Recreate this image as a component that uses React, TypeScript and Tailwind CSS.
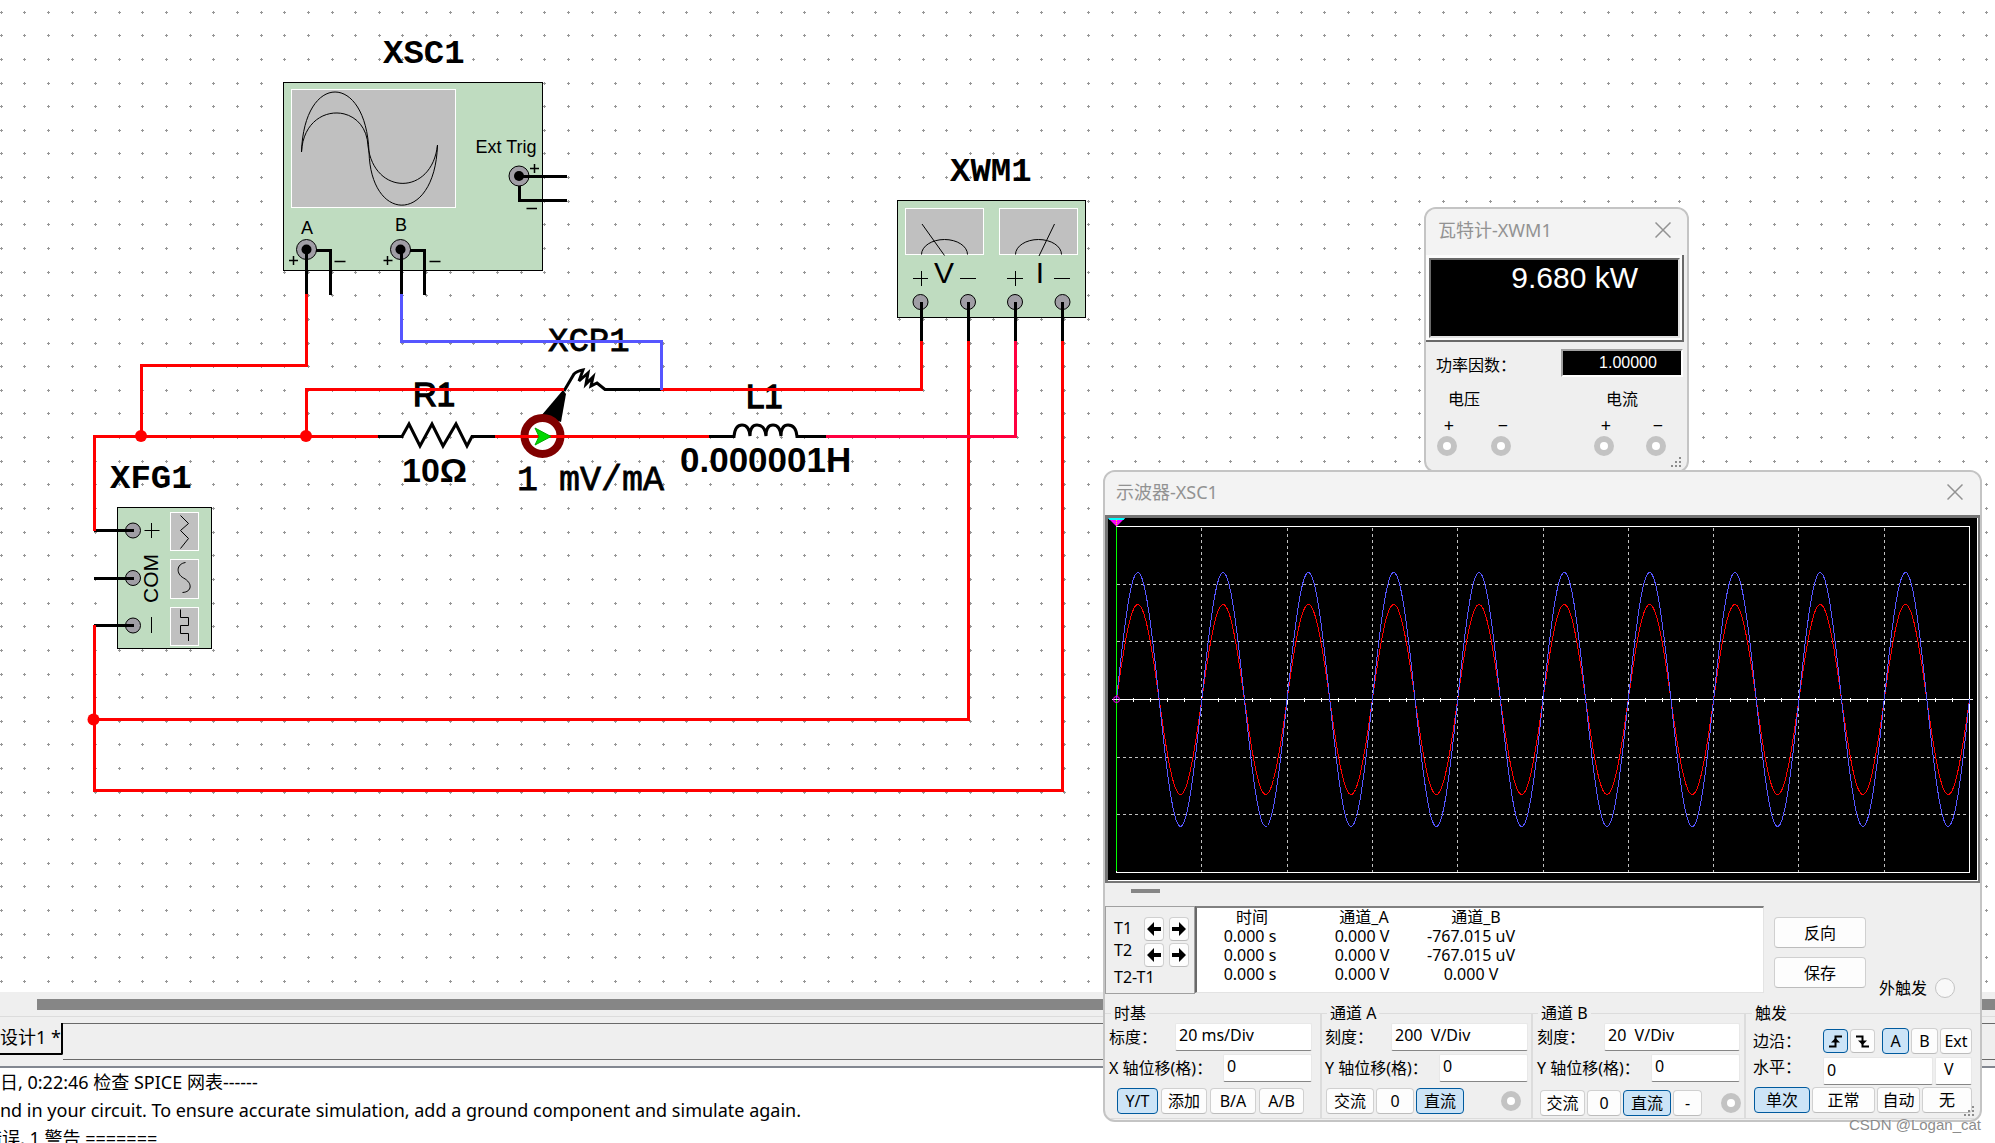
import React from "react";

const UI = "font-['Noto_Sans','Noto_Sans_CJK_SC',sans-serif]";

const GRID = (() => {
  let d = "";
  const pitch = 23.64;
  for (let r = 0; r < 60; r++) {
    for (let c = 0; c < 130; c++) {
      const x = Math.round(0.6 + c * pitch);
      const y = Math.round(11.6 + r * pitch);
      d += `M${x - 1} ${y + 0.5}h3M${x + 0.5} ${y - 1}v3`;
    }
  }
  return d;
})();

function Terminal({ x, y, core = false }: { x: number; y: number; core?: boolean }) {
  return (
    <g>
      <circle cx={x} cy={y} r={core ? 10 : 7.5} fill="#a09ea5" stroke="#000" strokeWidth="1" />
      {core && <circle cx={x} cy={y} r="5" fill="#000" />}
    </g>
  );
}

function Schematic() {
  const mono = "Liberation Mono, monospace";
  const sans = "Liberation Sans, sans-serif";
  return (
    <svg className="block h-full w-full" role="img" aria-label="Circuit schematic">
      <path d={GRID} stroke="#979797" strokeWidth="1" shapeRendering="crispEdges" />

      {/* oscilloscope symbol */}
      <rect x="283.5" y="82.5" width="259" height="188" fill="#bfdcc0" stroke="#000" />
      <rect x="291.5" y="89.5" width="164" height="118" fill="#c0c0c0" stroke="#fff" />
      <g fill="none" stroke="#000">
        <path d="M301.5 152C304 72 366 72 369 152C371 224 435 224 437.5 145" />
        <path d="M301.5 152C304 101 366 101 368 146C374 196 432 196 437.5 145" />
      </g>

      {/* function generator symbol */}
      <rect x="117.5" y="507.5" width="94" height="141" fill="#bfdcc0" stroke="#000" />
      <g fill="#c0c0c0" stroke="#fff">
        <rect x="170.5" y="512.5" width="28" height="38" />
        <rect x="170.5" y="559.5" width="28" height="39" />
        <rect x="170.5" y="607.5" width="28" height="38" />
      </g>
      <g fill="none" stroke="#000">
        <path d="M180.5 515.5L188.5 523.5L180.5 530.5L188.5 538.5L180.5 548.5" />
        <path d="M185.5 562.5C176 564 176 574 183.5 578C193 583 192 592 182.5 592.5" />
        <path d="M180.5 609.5V617.5H188.5V625.5H180.5V633.5H188.5V641" />
        <path d="M144.5 530.5H159.5M151.5 523V538M151.5 617V633" />
      </g>
      <text transform="translate(158 603) rotate(-90)" fontFamily={sans} fontSize="21">COM</text>

      {/* wattmeter symbol */}
      <rect x="897.5" y="200.5" width="188" height="117" fill="#bfdcc0" stroke="#000" />
      <g fill="#c0c0c0" stroke="#fff">
        <rect x="905.5" y="208.5" width="78" height="46" />
        <rect x="999.5" y="208.5" width="78" height="46" />
      </g>
      <g fill="none" stroke="#000">
        <path d="M921.5 254.5A23 15 0 0 1 967.5 254.5M1015.5 254.5A23 15 0 0 1 1061.5 254.5" />
        <path d="M922 224L944.5 255.5M1054.5 224L1039 256" />
        <path d="M913 278.5H928M921.5 271V286M960 278.5H976M1007 278.5H1023M1015.5 271V286M1054 278.5H1070" />
      </g>
      <g fontFamily={sans} fontSize="30" textAnchor="middle">
        <text x="944" y="283">V</text>
        <text x="1040" y="283">I</text>
      </g>

      <g fontFamily={sans} fontSize="18" textAnchor="middle">
        <text x="506" y="153">Ext Trig</text>
        <text x="307" y="234">A</text>
        <text x="401" y="231">B</text>
      </g>
      <g fill="none" stroke="#000" strokeWidth="1.5">
        <path d="M289 260.5H298M293.5 256V265M334.5 261.5H345.5M383.5 260.5H392.5M387.5 256V265M429.5 261.5H440.5" />
        <path d="M530 168.5H539M534.5 164V173M526.5 208.5H537" />
      </g>

      {/* component names and values */}
      <g fontFamily={mono} fontSize="34" fontWeight="700">
        <text x="383" y="63">XSC1</text>
        <text x="950" y="181">XWM1</text>
        <text x="110" y="488">XFG1</text>
      </g>
      <g fontFamily={mono} stroke="#000" strokeWidth="0.8">
        <text x="548" y="351" fontSize="34">XCP1</text>
        <text x="517" y="490" fontSize="35">1 mV/mA</text>
      </g>
      <g fontFamily={sans} fontSize="33" stroke="#000" strokeWidth="1.4">
        <text x="413" y="406">R1</text>
        <text x="746" y="408">L1</text>
      </g>
      <g fontFamily={sans} fontWeight="700">
        <text x="402" y="482" fontSize="34">10Ω</text>
        <text x="680" y="472" fontSize="35">0.000001H</text>
      </g>

      <Terminal x={306.5} y={249.5} core />
      <Terminal x={400.5} y={249.5} core />
      <Terminal x={519} y={176} core />
      <Terminal x={133} y={530.5} />
      <Terminal x={133} y={578} />
      <Terminal x={133} y={625.5} />
      <Terminal x={920.5} y={302} />
      <Terminal x={968} y={302} />
      <Terminal x={1015} y={302} />
      <Terminal x={1062.5} y={302} />

      {/* pins */}
      <g fill="none" stroke="#000" strokeWidth="3">
        <path d="M306.5 250V295M316 250.5H330.5V295M401.5 250V295M410 250.5H424.5V295" />
        <path d="M519 176.5H567M519.5 186V200.5H567" />
        <path d="M94 530.5H134M94 578.5H134M94 625.5H134" />
        <path d="M921.5 302V341M968.5 302V341M1015.5 302V341M1062.5 302V341" />
      </g>

      {/* probe handle and lead */}
      <path d="M563 390L566 394L561 422L541 416Z" />
      <path
        d="M564 391L574 374Q577 371 583 370L579 381L588 373L586 384L593 377L591 386L597 383L605 389.5H661"
        fill="none" stroke="#000" strokeWidth="3"
      />
      <circle cx="542.5" cy="436" r="18" fill="#fff" stroke="#800000" strokeWidth="8" />

      {/* wires */}
      <g fill="none" stroke="#f00" strokeWidth="3">
        <path d="M306.5 294V365.5H141.5V436.5" />
        <path d="M94.5 531V436.5H380" />
        <path d="M306.5 436V389.5H564M661 389.5H921.5V341" />
        <path d="M494 436.5H711" />
        <path d="M94.5 625V790.5H1062.5V341" />
        <path d="M94.5 719.5H968.5V341" />
      </g>
      <path d="M825 436.5H1015.5V341" fill="none" stroke="#ff0040" strokeWidth="3" />
      <path d="M401.5 294V341.5H661.5V390" fill="none" stroke="#5656ff" strokeWidth="3" />
      <g fill="#f00">
        <circle cx="141" cy="436" r="6" />
        <circle cx="306" cy="436" r="6" />
        <circle cx="93.5" cy="719.5" r="6" />
      </g>
      <path d="M535 428L551 436.5L535 445L539 436.5Z" fill="#00d800" stroke="#0a0" />
      <g fill="none" stroke="#000" strokeWidth="3">
        <path d="M378 436.5H402L409 424L420 446L432 424L443 446L456 424L467 446L472 436.5H495" />
        <path d="M709 436.5H734Q735 425 742 425Q749 425 750 436Q750 425 757 425Q765 425 766 436Q766 425 773 425Q780 425 781 436Q781 425 788 425Q796 425 797 436.5H826" />
      </g>
    </svg>
  );
}

function CloseButton() {
  return (
    <button type="button" aria-label="关闭" className="flex size-6 items-center justify-center">
      <svg width="16" height="16" viewBox="0 0 16 16" stroke="#929292" strokeWidth="1.5">
        <path d="M0.5 0.5L15.5 15.5M15.5 0.5L0.5 15.5" />
      </svg>
    </button>
  );
}

function Grip() {
  return (
    <svg className="absolute right-1 bottom-0.5" width="12" height="12" fill="#8c8c8c" aria-hidden="true">
      <path d="M8 0h2v2h-2zM4 4h2v2h-2zM8 4h2v2h-2zM0 8h2v2h-2zM4 8h2v2h-2zM8 8h2v2h-2z" />
    </svg>
  );
}

function Port({ name, label }: { name: string; label: string }) {
  return (
    <input
      type="radio"
      name={name}
      aria-label={label}
      className="block size-5 shrink-0 appearance-none rounded-full border-6 border-[#c3c3c3] bg-white"
    />
  );
}

function WattPort({ sign, label }: { sign: string; label: string }) {
  return (
    <label className="flex w-5 flex-col items-center">
      <span className="h-[21px] pl-1 text-lg leading-5">{sign}</span>
      <Port name="watt" label={label} />
    </label>
  );
}

function Wattmeter() {
  return (
    <section
      aria-label="瓦特计-XWM1"
      className="absolute top-[207px] left-[1424px] h-[266px] w-[265px] overflow-hidden rounded-xl border-2 border-[#c4c4c4] bg-[#efefef]"
    >
      <header className="flex h-[46px] items-center justify-between bg-[#f3f3f3] pr-3 pb-1 pl-3">
        <h2 className="text-lg leading-6 text-[#929292]">瓦特计-XWM1</h2>
        <CloseButton />
      </header>
      <div className="mr-[3px] border-r-2 border-b-2 border-[#696969]">
        <div className="border-t-3 border-r-2 border-b-2 border-l-3 border-[#fcfcfc]">
          <output className="block h-20 border-2 border-t-[#696969] border-r-[#e3e3e3] border-b-[#e3e3e3] border-l-[#696969] bg-black pr-10 text-right font-['Liberation_Sans',sans-serif] text-[30px] leading-9 text-white">
            9.680 kW
          </output>
        </div>
      </div>
      <div className="mt-[7px] flex items-center justify-between pr-1 pl-2.5">
        <span className="pt-1 text-base leading-5">功率因数：</span>
        <output className="h-7 w-[122px] border-2 border-t-[#a0a0a0] border-r-white border-b-white border-l-[#a0a0a0] bg-black pl-3 text-center font-['Liberation_Sans',sans-serif] text-base leading-6 text-white">
          1.00000
        </output>
      </div>
      <div className="mt-2.5 grid grid-cols-[157px_1fr] text-base">
        <span className="pl-[22px] leading-6">电压</span>
        <span className="pl-[23px] leading-6">电流</span>
        <div className="flex gap-[34px] pt-1 pl-[11px]">
          <WattPort sign="+" label="电压 +" />
          <WattPort sign="−" label="电压 −" />
        </div>
        <div className="flex gap-8 pt-1 pl-[11px]">
          <WattPort sign="+" label="电流 +" />
          <WattPort sign="−" label="电流 −" />
        </div>
      </div>
      <Grip />
    </section>
  );
}

function wave(amp: number) {
  const pts: string[] = [];
  for (let x = 0; x <= 853; x++) {
    pts.push(`${x + 8.5},${(181.5 - amp * Math.sin((x / 85.3) * 2 * Math.PI)).toFixed(1)}`);
  }
  return pts.join(" ");
}

function Trace() {
  const cols = [1, 2, 3, 4, 5, 6, 7, 8, 9].map((k) => Math.round(8 + k * 85.3) + 0.5);
  const rows = [66.5, 123.5, 239.5, 296.5];
  let ticks = "";
  for (let i = 1; i <= 50; i++) {
    const x = Math.round(8 + i * 17.06) + 0.5;
    ticks += i % 5 === 0 ? `M${x} 178v8` : `M${x} 180v4`;
  }
  return (
    <svg className="block h-[362px] w-full bg-black" viewBox="0 0 869 362" role="img" aria-label="示波器波形">
      <g fill="none" shapeRendering="crispEdges">
        <g stroke="#c0c0c0" strokeDasharray="3 3">
          {cols.map((x) => (
            <path key={x} d={`M${x} 10V354`} />
          ))}
          {rows.map((y) => (
            <path key={y} d={`M9 ${y}H861`} />
          ))}
        </g>
        <path d="M8.5 8.5H861.5V354.5H8.5Z" stroke="#fff" />
        <path d="M8.5 9V353" stroke="#0f0" />
        <polyline points={wave(95)} stroke="#f00" />
        <path d="M4 181.5H865" stroke="#fff" />
        <path d={ticks} stroke="#fff" />
        <polyline points={wave(127)} stroke="#5656ff" />
      </g>
      <circle cx="8.5" cy="181.5" r="3" fill="none" stroke="#f0f" />
      <path d="M0 0H17L8.5 8.5Z" fill="#f0f" />
      <path d="M0 0H17L15.5 2H1.5Z" fill="#0ff" />
      <path d="M8.5 2V7" stroke="#ff0" strokeDasharray="1 1" />
    </svg>
  );
}

function Btn({
  children, className, on = false, label,
}: { children: React.ReactNode; className: string; on?: boolean; label?: string }) {
  return (
    <button
      type="button"
      aria-label={label}
      aria-pressed={on}
      className={`flex shrink-0 items-center justify-center rounded border text-base leading-5 whitespace-nowrap ${
        on ? "border-[#005a9e] bg-[#cce4f7]" : "border-[#d0d0d0] border-b-[#bcbcbc] bg-[#fdfdfd]"
      } ${className}`}
    >
      {children}
    </button>
  );
}

function Field({ label, value, className }: { label: string; value: string; className: string }) {
  return (
    <label className="flex h-7 items-center justify-between">
      <span className="text-base leading-6 whitespace-nowrap">{label}</span>
      <input
        type="text"
        defaultValue={value}
        className={`h-7 min-w-0 rounded-xs border border-[#e8e8e8] border-b-[#868686] bg-white pb-1 pl-[3px] text-base leading-5 ${className}`}
      />
    </label>
  );
}

function Arrow({ flip = false }: { flip?: boolean }) {
  return (
    <svg width="14" height="14" viewBox="0 0 14 14" className={flip ? "rotate-180" : ""}>
      <path d="M0 7L7 0V5H14V9H7V14Z" />
    </svg>
  );
}

function CursorKeys({ name }: { name: string }) {
  return (
    <div className="flex gap-[5px]">
      <Btn className="h-6 w-5" label={`${name} 左移`}><Arrow /></Btn>
      <Btn className="h-6 w-5" label={`${name} 右移`}><Arrow flip /></Btn>
    </div>
  );
}

const READINGS = [
  ["0.000 s", "0.000 V", "-767.015 uV"],
  ["0.000 s", "0.000 V", "-767.015 uV"],
  ["0.000 s", "0.000 V", "0.000 V"],
];

const GROUP = "min-w-0 border-t border-r-2 border-b border-[#dcdcdc]";
const LEGEND = "h-[19px] px-[3px] text-base leading-[19px]";

function Oscilloscope() {
  return (
    <section
      aria-label="示波器-XSC1"
      className="absolute top-[470px] left-[1103px] h-[652px] w-[879px] overflow-hidden rounded-xl border-2 border-[#c4c4c4] bg-[#efefef]"
    >
      <header className="flex h-[43px] items-center justify-between bg-[#f3f3f3] pr-[13px] pb-[3px] pl-[11px]">
        <h2 className="text-lg leading-6 text-[#929292]">示波器-XSC1</h2>
        <CloseButton />
      </header>
      <div className="border-t-3 border-r-2 border-b-2 border-l-3 border-[#757575]">
        <div className="border-r border-b border-white">
          <Trace />
        </div>
      </div>
      <div className="flex h-[23px] items-center pb-2 pl-[26px]">
        <div className="h-1 w-[29px] bg-[#868686]" />
      </div>

      <div className="flex h-[88px]">
        <div className="flex w-[90px] border border-[#a0a0a0] pt-2.5 pl-2">
          <div className="w-[30px] text-base whitespace-nowrap">
            <div className="leading-[22px]">T1</div>
            <div className="leading-[22px]">T2</div>
            <div className="leading-8">T2-T1</div>
          </div>
          <div className="flex flex-col gap-0.5">
            <CursorKeys name="T1" />
            <CursorKeys name="T2" />
          </div>
        </div>
        <div className="h-[87px] w-[569px] border-t-2 border-r border-b border-l-2 border-t-[#808080] border-r-[#e3e3e3] border-b-[#e3e3e3] border-l-[#696969] bg-white">
          <table className="table-fixed border-collapse text-center text-base leading-[19px] whitespace-nowrap">
            <colgroup>
              <col className="w-[110px]" />
              <col className="w-[114px]" />
              <col className="w-[104px]" />
            </colgroup>
            <thead>
              <tr className="h-[19px]">
                <th className="p-0 font-normal">时间</th>
                <th className="p-0 font-normal">通道_A</th>
                <th className="p-0 pl-1.5 font-normal">通道_B</th>
              </tr>
            </thead>
            <tbody>
              {READINGS.map((r, i) => (
                <tr key={i} className="h-[19px]">
                  {r.map((v, j) => (
                    <td key={j} className="p-0 pr-1">{v}</td>
                  ))}
                </tr>
              ))}
            </tbody>
          </table>
        </div>
        <div className="flex flex-col gap-[9px] pt-[11px] pl-[10px]">
          <Btn className="h-[31px] w-[92px]">反向</Btn>
          <Btn className="h-[31px] w-[92px]">保存</Btn>
        </div>
        <label className="-mb-1 ml-[13px] flex items-center gap-2 self-end text-base leading-5">
          外触发
          <input
            type="radio"
            name="ext"
            className="size-5 appearance-none rounded-full border border-[#c3c3c3] bg-[#f8f8f8]"
          />
        </label>
      </div>

      <div className="mt-2.5 grid h-[115px] grid-cols-[217px_211px_213px_1fr]">
        <fieldset className={GROUP}>
          <legend className={`ml-1.5 ${LEGEND}`}>时基</legend>
          <div className="flex flex-col gap-[3px] pr-2 pl-1">
            <Field label="标度：" value="20 ms/Div" className="w-[137px]" />
            <Field label="X 轴位移(格)：" value="0" className="w-[89px]" />
          </div>
          <div className="mt-1.5 flex gap-[3px] pl-3">
            <Btn on className="h-[26px] w-[41px]">Y/T</Btn>
            <Btn className="h-[26px] w-[46px]">添加</Btn>
            <Btn className="h-[26px] w-[46px]">B/A</Btn>
            <Btn className="h-[26px] w-[45px]">A/B</Btn>
          </div>
        </fieldset>

        <fieldset className={GROUP}>
          <legend className={`ml-[5px] ${LEGEND}`}>通道 A</legend>
          <div className="flex flex-col gap-[3px] pr-[3px] pl-[3px]">
            <Field label="刻度：" value="200  V/Div" className="w-[137px]" />
            <Field label="Y 轴位移(格)：" value="0" className="w-[89px]" />
          </div>
          <div className="mt-1.5 flex items-center gap-0.5 pl-1">
            <Btn className="h-[26px] w-12">交流</Btn>
            <Btn className="h-[26px] w-[38px]">0</Btn>
            <Btn on className="h-[26px] w-12">直流</Btn>
            <span className="ml-[35px]"><Port name="cha" label="通道 A" /></span>
          </div>
        </fieldset>

        <fieldset className={GROUP}>
          <legend className={`ml-[5px] ${LEGEND}`}>通道 B</legend>
          <div className="flex flex-col gap-[3px] pr-1 pl-1">
            <Field label="刻度：" value="20  V/Div" className="w-[136px]" />
            <Field label="Y 轴位移(格)：" value="0" className="w-[89px]" />
          </div>
          <div className="mt-2 flex items-center gap-0.5 pl-[7px]">
            <Btn className="h-[26px] w-[45px]">交流</Btn>
            <Btn className="h-[26px] w-[34px]">0</Btn>
            <Btn on className="h-[26px] w-12">直流</Btn>
            <Btn className="h-[26px] w-[29px]">-</Btn>
            <span className="ml-[17px]"><Port name="chb" label="通道 B" /></span>
          </div>
        </fieldset>

        <fieldset className="min-w-0 border-t border-b border-[#dcdcdc]">
          <legend className={`ml-1.5 ${LEGEND}`}>触发</legend>
          <div className="mt-[5px] flex items-center gap-0.5 pl-[7px]">
            <span className="w-[68px] text-base leading-6 whitespace-nowrap">边沿：</span>
            <Btn on className="h-6 w-[25px]" label="上升沿">
              <svg width="15" height="15" viewBox="0 0 15 15">
                <path d="M1 12.5H7.5V2.5H14" fill="none" stroke="#000" strokeWidth="2" />
                <path d="M3 8.5L7.5 4L12 8.5Z" />
              </svg>
            </Btn>
            <Btn className="h-6 w-[25px]" label="下降沿">
              <svg width="15" height="15" viewBox="0 0 15 15">
                <path d="M1 2.5H7.5V12.5H14" fill="none" stroke="#000" strokeWidth="2" />
                <path d="M3 6.5L7.5 11L12 6.5Z" />
              </svg>
            </Btn>
            <Btn on className="ml-[5px] h-[26px] w-[27px]">A</Btn>
            <Btn className="h-[26px] w-[27px]">B</Btn>
            <Btn className="h-[26px] w-8">Ext</Btn>
          </div>
          <div className="mt-[3px] flex items-start gap-0.5 pl-[7px]">
            <label htmlFor="level" className="w-[68px] text-base leading-5 whitespace-nowrap">水平：</label>
            <input
              id="level"
              type="text"
              defaultValue="0"
              className="h-7 w-[110px] rounded-xs border border-[#e8e8e8] border-b-[#868686] bg-white pb-0.5 pl-[3px] text-base leading-5"
            />
            <input
              type="text"
              aria-label="单位"
              defaultValue="V"
              className="h-7 w-[37px] rounded-xs border border-[#e8e8e8] border-b-[#868686] bg-white pb-1 pl-2 text-base leading-5"
            />
          </div>
          <div className="mt-0.5 flex gap-0.5 pl-2">
            <Btn on className="h-[26px] w-14">单次</Btn>
            <Btn className="h-[26px] w-[63px]">正常</Btn>
            <Btn className="h-[26px] w-[43px]">自动</Btn>
            <Btn className="h-[26px] w-[50px]">无</Btn>
          </div>
        </fieldset>
      </div>
      <Grip />
    </section>
  );
}

export default function App() {
  return (
    <div className={`relative flex h-screen flex-col overflow-hidden bg-white text-black ${UI}`}>
      <main className="min-h-0 flex-1">
        <Schematic />
      </main>

      <div className="h-[25px] border-b border-[#dcdcdc] bg-[#efefef] pt-[7px]">
        <div className="ml-[37px] h-[11px] bg-[#868686]" />
      </div>
      <nav className="flex h-[43px] items-start bg-[#efefef] pt-1.5">
        <a href="#design" className="h-8 w-[63px] rounded-br-xs border-r-2 border-b-2 border-black text-lg leading-7 whitespace-nowrap">
          设计1 *
        </a>
        <div className="h-[37px] flex-1 border-t border-b border-[#696969]" />
      </nav>
      <div className="h-2 border-b-2 border-[#828790] bg-[#efefef]" />
      <div className="h-[75px] overflow-hidden bg-white text-lg leading-7 whitespace-pre">
        <p>日, 0:22:46 检查 SPICE 网表------</p>
        <p>nd in your circuit. To ensure accurate simulation, add a ground component and simulate again.</p>
        <p className="-ml-4">错误, 1 警告 =======</p>
      </div>

      <Wattmeter />
      <Oscilloscope />
      <div className="absolute right-[14px] bottom-2 font-['Liberation_Sans',sans-serif] text-[15px] leading-5 text-[#8c8c8c] text-shadow-[1px_1px_0_#ffffff]">
        CSDN @Logan_cat
      </div>
    </div>
  );
}
